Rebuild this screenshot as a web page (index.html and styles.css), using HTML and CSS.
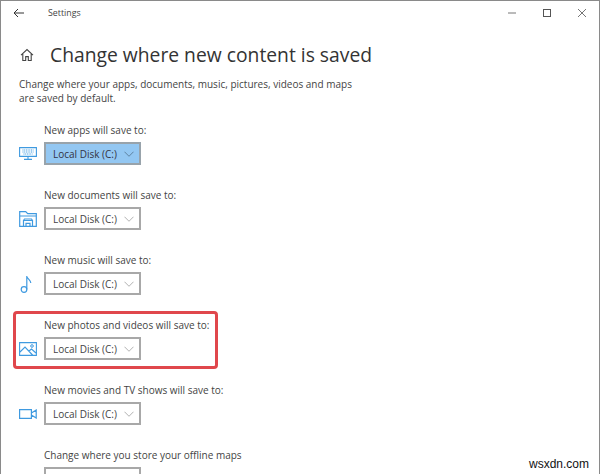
FILE: index.html
```html
<!DOCTYPE html>
<html lang="en">
<head>
  <meta charset="UTF-8">
  <title>Settings</title>
  <link rel="stylesheet" href="styles.css">
</head>
<body>
  <div class="window">
    <header class="titlebar">
      <svg class="back" width="12" height="10" viewBox="0 0 12 10"><path d="M11 5H1M5 1L1 5l4 4" fill="none" stroke="#333" stroke-width="1"/></svg>
      <span class="app-name">Settings</span>
      <div class="controls">
        <svg width="10" height="10" viewBox="0 0 10 10"><path d="M1 5h8" stroke="#777" stroke-width="1"/></svg>
        <svg width="10" height="10" viewBox="0 0 10 10"><rect x="1.500" y="1.500" width="7" height="7" fill="none" stroke="#555" stroke-width="1"/></svg>
        <svg width="10" height="10" viewBox="0 0 10 10"><path d="M1 1l8 8M9 1l-8 8" stroke="#666" stroke-width="0.900"/></svg>
      </div>
    </header>

    <div class="heading">
      <svg class="home" width="14" height="14" viewBox="0 0 14 14"><path d="M1 7.200L7 1.500l6 5.700M2.800 6v6.500h2.900V8.600h2.600v3.900h2.900V6" fill="none" stroke="#444" stroke-width="1.100"/></svg>
      <h1>Change where new content is saved</h1>
    </div>
    <p class="intro">Change where your apps, documents, music, pictures, videos and maps<br>are saved by default.</p>

    <section class="group">
      <label>New apps will save to:</label>
      <div class="row">
        <svg class="icon" width="18" height="13" viewBox="0 0 18 13"><path d="M.6.6h16.800v8.800H.6zM9 9.500v2.500M5 12.400h8" fill="none" stroke="#3f9ae0" stroke-width="1.100"/><path d="M3.500 3h11M3.500 5h11M4.500 7h9" fill="none" stroke="#3f9ae0" stroke-width="1" stroke-dasharray="1 .7"/></svg>
        <div class="select active"><span>Local Disk (C:)</span><svg width="10" height="6" viewBox="0 0 11 6"><path d="M.5.5l5 5 5-5" fill="none" stroke="#5b7d99"/></svg></div>
      </div>
    </section>

    <section class="group">
      <label>New documents will save to:</label>
      <div class="row">
        <svg class="icon" width="18" height="16" viewBox="0 0 18 16"><path d="M.7 15.300V.7h6l2 2h8.600v12.600zM.7 5h16.600M4.500 15.300V9.500h9v5.800M7 15.300v-3h4v3M4.500 9.500l1-1.500h7l1 1.500" fill="none" stroke="#3f9ae0" stroke-width="1.200"/></svg>
        <div class="select"><span>Local Disk (C:)</span><svg width="10" height="6" viewBox="0 0 11 6"><path d="M.5.5l5 5 5-5" fill="none" stroke="#aaa"/></svg></div>
      </div>
    </section>

    <section class="group">
      <label>New music will save to:</label>
      <div class="row">
        <svg class="icon" width="18" height="18" viewBox="0 0 18 18"><circle cx="5" cy="14.500" r="2.800" fill="none" stroke="#3f9ae0" stroke-width="1.200"/><path d="M7.800 14.500V1c.5 3 4 4 4 7" fill="none" stroke="#3f9ae0" stroke-width="1.200"/></svg>
        <div class="select"><span>Local Disk (C:)</span><svg width="10" height="6" viewBox="0 0 11 6"><path d="M.5.5l5 5 5-5" fill="none" stroke="#aaa"/></svg></div>
      </div>
    </section>

    <section class="group">
      <label>New photos and videos will save to:</label>
      <div class="row">
        <svg class="icon" width="18" height="14" viewBox="0 0 18 14"><path d="M.6.6h16.800v12.800H.6zM1 10l5-5 8 8.500M10 9l2.500-2 5 4.500" fill="none" stroke="#3f9ae0" stroke-width="1.100"/><circle cx="13" cy="4" r="1.300" fill="none" stroke="#3f9ae0"/></svg>
        <div class="select"><span>Local Disk (C:)</span><svg width="10" height="6" viewBox="0 0 11 6"><path d="M.5.5l5 5 5-5" fill="none" stroke="#aaa"/></svg></div>
      </div>
      <div class="callout"></div>
    </section>

    <section class="group">
      <label>New movies and TV shows will save to:</label>
      <div class="row">
        <svg class="icon" width="18" height="10" viewBox="0 0 18 10"><path d="M.6.6h11.800v8.800H.6zM12.400 4l4.800-3v8l-4.800-3" fill="none" stroke="#3f9ae0" stroke-width="1.200"/></svg>
        <div class="select"><span>Local Disk (C:)</span><svg width="10" height="6" viewBox="0 0 11 6"><path d="M.5.5l5 5 5-5" fill="none" stroke="#aaa"/></svg></div>
      </div>
    </section>

    <section class="group">
      <label>Change where you store your offline maps</label>
      <div class="row">
        <div class="select"></div>
      </div>
    </section>
  </div>
  <div class="watermark">wsxdn.com</div>
</body>
</html>
```

FILE: styles.css
```css
* {
  margin: 0;
  padding: 0;
  box-sizing: border-box;
}

html, body {
  width: 600px;
  height: 474px;
  overflow: hidden;
}

body {
  position: relative;
  background: #fff;
  font-family: "Open Sans", "Noto Sans", sans-serif;
  color: #333;
}

.window {
  height: 474px;
  overflow: hidden;
  border: 1px solid #8a8a8a;
  border-bottom: none;
}

.titlebar {
  display: flex;
  align-items: center;
  height: 24px;
  padding-left: 12px;
}

.app-name {
  margin-left: 23px;
  font-size: 8.800px;
  color: #444;
}

.controls {
  display: flex;
  gap: 25px;
  margin-left: auto;
  padding-right: 12px;
}

.heading {
  display: flex;
  align-items: center;
  gap: 16px;
  margin-top: 16px;
  padding-left: 19px;
}

.heading h1 {
  font-size: 19.300px;
  font-weight: 400;
  color: #333;
  line-height: 28px;
}

.intro {
  margin-top: 8px;
  padding-left: 18px;
  font-size: 10px;
  line-height: 14px;
  color: #444;
}

.group {
  position: relative;
  height: 65px;
  padding-left: 43px;
}

.intro + .group {
  margin-top: 18px;
}

.group label {
  display: block;
  font-size: 10px;
  line-height: 14px;
  color: #444;
  margin-bottom: 5px;
}

.row {
  display: flex;
  align-items: center;
  position: relative;
}

.icon {
  position: absolute;
  left: -25px;
}

.select {
  display: flex;
  align-items: center;
  justify-content: space-between;
  width: 97px;
  height: 23px;
  padding: 0 5px 0 7px;
  border: 2px solid #a8a8a8;
  background: #fff;
  font-size: 10px;
  color: #444;
  white-space: nowrap;
}

.select.active {
  background: #93c7f2;
  border-color: #98a3ab;
  color: #334;
}

.callout {
  position: absolute;
  left: 12px;
  top: -7px;
  width: 205px;
  height: 58px;
  border: 3px solid #e0474c;
  border-radius: 4px;
}

.watermark {
  position: absolute;
  right: 11px;
  bottom: 3px;
  font-family: "Liberation Sans", sans-serif;
  font-size: 12px;
  color: #111;
}
```
